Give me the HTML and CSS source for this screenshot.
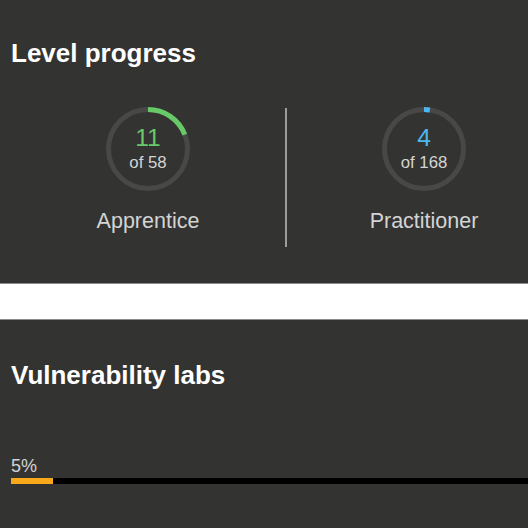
FILE: index.html
```html
<!DOCTYPE html>
<html lang="en">
<head>
<meta charset="utf-8">
<title>Progress</title>
<link rel="stylesheet" href="styles.css">
</head>
<body>
<div class="page">
  <section class="section progress">
    <h2 class="title">Level progress</h2>
    <div class="levels">
      <div class="level">
        <div class="ring">
          <svg class="ring-svg" width="84" height="84" viewBox="0 0 84 84">
            <circle cx="42" cy="42" r="39.5" fill="none" stroke="#484847" stroke-width="5"/>
            <circle cx="42" cy="42" r="39.5" fill="none" stroke="#67c967" stroke-width="5"
              stroke-dasharray="47.3 300" transform="rotate(-90 42 42)"/>
          </svg>
          <div class="ring-text">
            <span class="count green">11</span>
            <span class="total">of 58</span>
          </div>
        </div>
        <div class="label">Apprentice</div>
      </div>
      <div class="divider"></div>
      <div class="level level-right">
        <div class="ring">
          <svg class="ring-svg" width="84" height="84" viewBox="0 0 84 84">
            <circle cx="42" cy="42" r="39.5" fill="none" stroke="#484847" stroke-width="5"/>
            <circle cx="42" cy="42" r="39.5" fill="none" stroke="#4cb8f2" stroke-width="5"
              stroke-dasharray="5.9 300" transform="rotate(-90 42 42)"/>
          </svg>
          <div class="ring-text">
            <span class="count blue">4</span>
            <span class="total">of 168</span>
          </div>
        </div>
        <div class="label">Practitioner</div>
      </div>
    </div>
  </section>
  <div class="band"></div>
  <section class="section labs">
    <h2 class="title">Vulnerability labs</h2>
    <div class="pct">5%</div>
    <div class="bar"><div class="bar-fill" style="width:8.1%"></div></div>
  </section>
</div>
</body>
</html>
```
FILE: styles.css
```css
html, body {
  margin: 0;
  padding: 0;
  background: #333332;
}
body {
  font-family: "Liberation Sans", Arial, sans-serif;
  color: #d4d4d4;
}
.page {
  width: 528px;
}
.section {
  padding: 0 0 0 11px;
}
.title {
  margin: 0;
  font-size: 26px;
  line-height: 30px;
  font-weight: bold;
  color: #ffffff;
}
.progress {
  padding-top: 38px;
  padding-bottom: 36px;
}
.levels {
  display: grid;
  grid-template-columns: 274px 2px 1fr;
  align-items: start;
  margin-top: 39px;
}
.level {
  display: flex;
  flex-direction: column;
  align-items: center;
}
.level-right {
  padding-left: 33px;
}
.ring {
  display: grid;
  width: 84px;
  height: 84px;
}
.ring-svg, .ring-text {
  grid-area: 1 / 1;
}
.ring-svg {
  display: block;
}
.ring-text {
  display: flex;
  flex-direction: column;
  align-items: center;
  justify-content: center;
}
.count {
  font-size: 24.5px;
  line-height: 24px;
}
.green { color: #67c967; }
.blue { color: #4cb8f2; }
.total {
  margin-top: 3px;
  font-size: 16.8px;
  line-height: 20px;
  color: #d4d4d4;
}
.label {
  margin-top: 18px;
  font-size: 21.5px;
  line-height: 25px;
  color: #d4d4d4;
}
.divider {
  width: 2px;
  height: 139px;
  margin-top: 1px;
  background: #9c9c9c;
}
.band {
  height: 35px;
  background: #ffffff;
  border-top: 1px solid #8a8a8a;
  border-bottom: 1px solid #8a8a8a;
}
.labs {
  padding-top: 40px;
}
.pct {
  margin-top: 66px;
  font-size: 18px;
  line-height: 21px;
  color: #d4d4d4;
}
.bar {
  margin-top: 1px;
  height: 6px;
  background: #000000;
}
.bar-fill {
  height: 100%;
  background: #f7a91b;
}
```
